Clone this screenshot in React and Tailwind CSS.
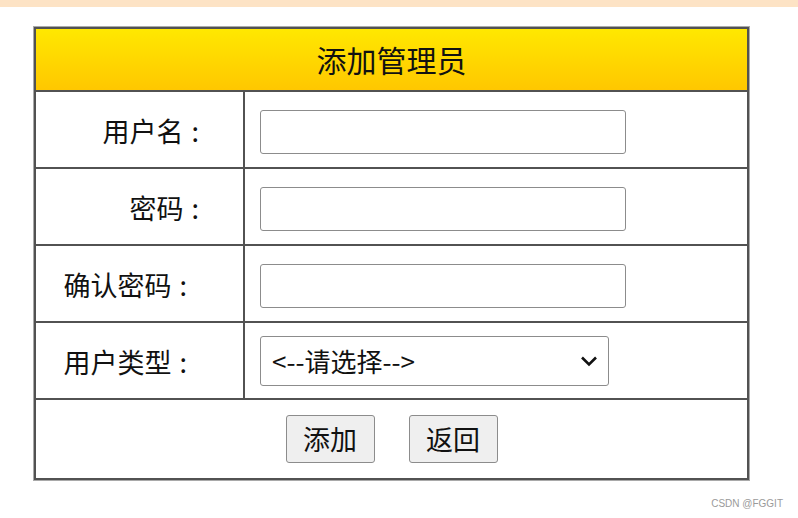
import React from 'react';

const cjk = { fontFamily: '"Microsoft YaHei", "Noto Sans CJK SC", "Noto Sans", sans-serif' };

const FormRow = ({ label, pad, shift = '', children }) => (
  <div className="flex h-[77px] border-t-2 border-[#525252]">
    <div
      className={`w-[207px] flex items-center justify-end text-[27px] text-[#111] pt-[3px] ${pad}`}
      style={cjk}
    >
      {label}
      <span className="ml-[8px]">:</span>
    </div>
    <div className={`flex-1 flex items-center pl-[15px] border-l-2 border-[#525252] ${shift}`}>
      {children}
    </div>
  </div>
);

const TextInput = ({ type = 'text' }) => (
  <input
    type={type}
    className="w-[366px] h-[44px] border border-[#8c8c8c] rounded-[3px] bg-white px-2 text-[20px] outline-none"
  />
);

const App = () => {
  return (
    <div className="w-[798px] h-[518px] bg-white relative overflow-hidden">
      <div className="h-[7px] bg-[#fde3c5]" />

      <div className="mt-[19px] ml-[33px] w-[717px] border border-[#a9a9a9]">
        <div className="border-2 border-[#525252]">
          <div
            className="h-[61px] flex items-center justify-center bg-gradient-to-b from-[#ffe800] to-[#ffc700] text-[30px] text-[#111]"
            style={cjk}
          >
            添加管理员
          </div>

          <FormRow label="用户名" pad="pr-[44px]" shift="pt-[4px]">
            <TextInput />
          </FormRow>
          <FormRow label="密码" pad="pr-[44px]" shift="pt-[4px]">
            <TextInput type="password" />
          </FormRow>
          <FormRow label="确认密码" pad="pr-[56px]" shift="pt-[4px]">
            <TextInput type="password" />
          </FormRow>
          <FormRow label="用户类型" pad="pr-[56px]">
            <div className="relative w-[349px] h-[50px] border border-[#8c8c8c] rounded-[3px] bg-white flex items-center">
              <select
                className="appearance-none w-full h-full bg-transparent pl-[11px] text-[26px] text-[#111] outline-none"
                style={cjk}
                defaultValue=""
              >
                <option value="">&lt;--请选择--&gt;</option>
                <option value="1">超级管理员</option>
                <option value="2">普通管理员</option>
              </select>
              <svg
                className="absolute right-[10px] top-1/2 -translate-y-1/2 pointer-events-none"
                width="18"
                height="12"
                viewBox="0 0 18 12"
              >
                <path d="M2 2.5 L9 9.5 L16 2.5" fill="none" stroke="#111" strokeWidth="2.6" />
              </svg>
            </div>
          </FormRow>

          <div className="h-[80px] flex items-center justify-center gap-[34px] border-t-2 border-[#525252]">
            <button
              className="w-[89px] h-[48px] bg-[#efefef] border border-[#8c8c8c] rounded-[3px] text-[27px] text-[#111]"
              style={cjk}
            >
              添加
            </button>
            <button
              className="w-[89px] h-[48px] bg-[#efefef] border border-[#8c8c8c] rounded-[3px] text-[27px] text-[#111]"
              style={cjk}
            >
              返回
            </button>
          </div>
        </div>
      </div>

      <div
        className="absolute right-[15px] bottom-[7px] text-[10px] text-[#9a9a9a]"
        style={{ fontFamily: '"Liberation Sans", Arial, sans-serif' }}
      >
        CSDN @FGGIT
      </div>
    </div>
  );
};

export default App;
